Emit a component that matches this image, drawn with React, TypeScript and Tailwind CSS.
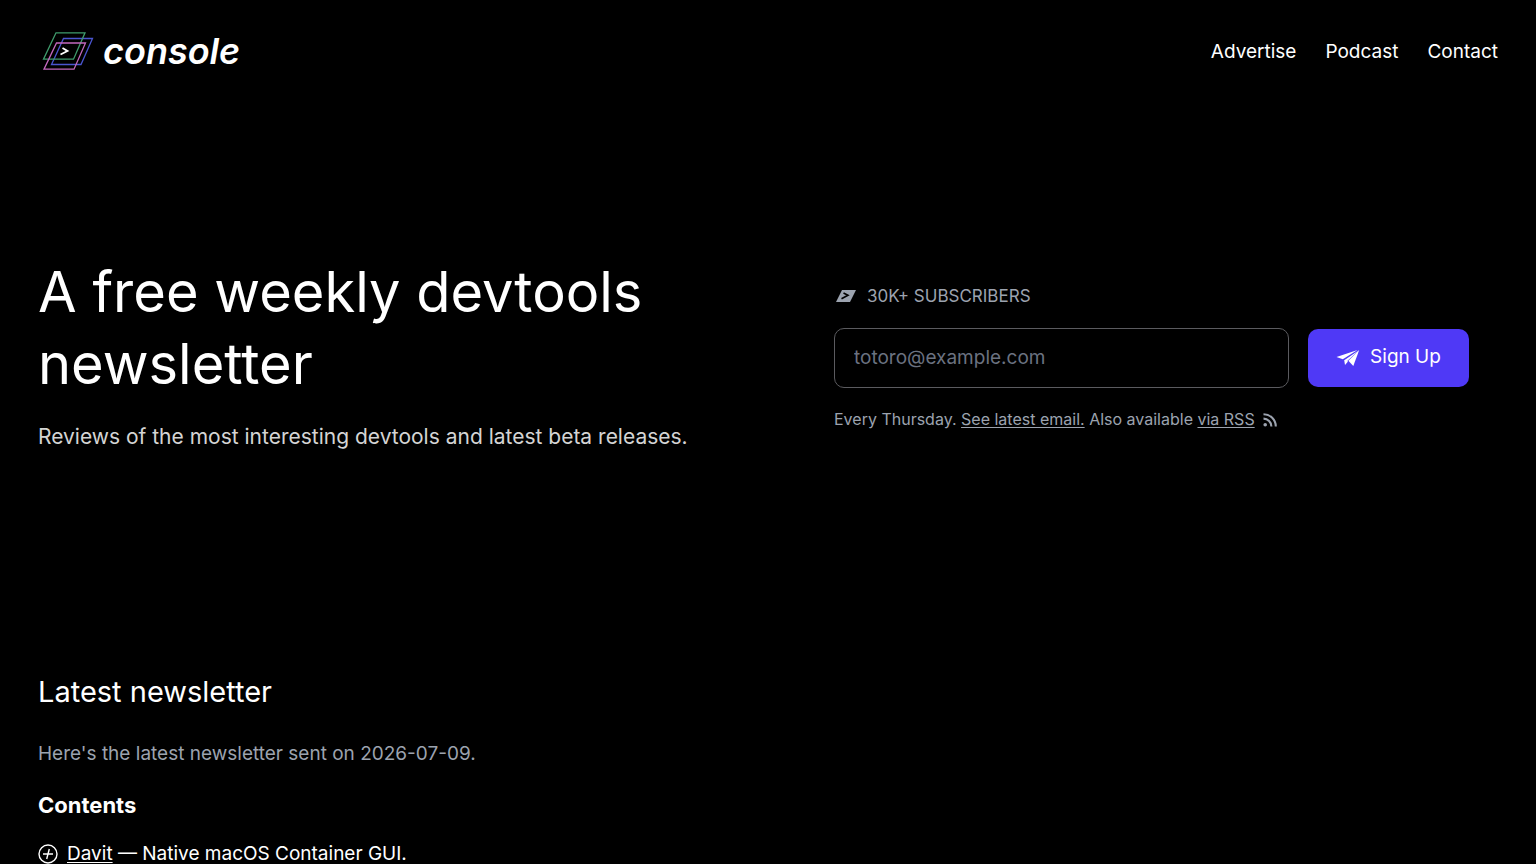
import React, { useState } from "react";

const navLinks = [
  { label: "Advertise", href: "#advertise" },
  { label: "Podcast", href: "#podcast" },
  { label: "Contact", href: "#contact" },
];

const contents = [
  { name: "Davit", description: "Native macOS Container GUI.", href: "#davit" },
];

const LogoMark = () => (
  <svg viewBox="0 0 52 40" fill="none" className="w-[52px] h-10" aria-hidden="true">
    <path d="M21.5 7.5H50.5L39 33.5H9.5Z" stroke="#4a55cf" strokeWidth="1.3" />
    <path d="M14 1.8H43L31.5 28.2H1.5Z" stroke="#3f9b6c" strokeWidth="1.3" />
    <path d="M14.5 12H43.5L32 38.2H2Z" stroke="#c468be" strokeWidth="1.3" />
    <path d="M20.5 17L25.5 20L18.5 23.5" stroke="#fff" strokeWidth="1.8" />
  </svg>
);

const SubscribersIcon = () => (
  <svg viewBox="0 0 20 14" className="w-5 h-[14px]" aria-hidden="true">
    <path d="M6 1H20L14 13H0Z" fill="#9ca3af" />
    <path d="M7.5 4L12 6.3L5.5 9.8" fill="none" stroke="#000" strokeWidth="1.6" />
  </svg>
);

const PaperPlaneIcon = () => (
  <svg viewBox="0 0 24 18" fill="currentColor" className="w-6 h-[18px]" aria-hidden="true">
    <path d="M21.5 1L0.5 8L6.8 10.2Z" />
    <path d="M23 1.2L8.2 11.2L9 16L11.8 12.8L11.5 11.8Z" />
    <path d="M23.2 1L12.4 11.8L17.3 17Z" />
  </svg>
);

const RssIcon = () => (
  <svg viewBox="0 0 14 14" fill="none" stroke="currentColor" className="inline w-[14px] h-[14px] ml-2" aria-hidden="true">
    <circle cx="2.2" cy="11.8" r="1.8" fill="currentColor" stroke="none" />
    <path d="M0.5 5.6A7.9 7.9 0 0 1 8.4 13.5M0.5 1.2A12.3 12.3 0 0 1 12.8 13.5" strokeWidth="2.1" />
  </svg>
);

const PlusCircleIcon = () => (
  <svg viewBox="0 0 20 20" fill="none" stroke="currentColor" className="w-5 h-5 shrink-0" aria-hidden="true">
    <circle cx="10" cy="10" r="9" strokeWidth="1.4" />
    <path d="M5 10H15M11.3 5L8.7 15" strokeWidth="1.4" />
  </svg>
);

const Header = () => (
  <header className="flex items-center justify-between px-[38px] pt-[31px]">
    <a href="#home" className="flex items-center gap-[9px] pl-1">
      <LogoMark />
      <span className="text-4xl font-semibold italic">console</span>
    </a>
    <nav className="flex gap-[29px] pt-0.5 text-[19px] leading-7">
      {navLinks.map((link) => (
        <a key={link.label} href={link.href}>
          {link.label}
        </a>
      ))}
    </nav>
  </header>
);

const SignUpForm = () => {
  const [email, setEmail] = useState("");

  return (
    <form onSubmit={(e) => e.preventDefault()} className="text-[#9ca3af]">
      <label htmlFor="email" className="flex items-center gap-[11px] pl-0.5 text-[17px] leading-6">
        <SubscribersIcon />
        30K+ SUBSCRIBERS
      </label>
      <div className="flex items-center gap-[19px] mt-5">
        <input
          id="email"
          type="email"
          value={email}
          onChange={(e) => setEmail(e.target.value)}
          placeholder="totoro@example.com"
          className="flex-1 min-w-0 h-[60px] px-[19px] text-[19px] text-white placeholder-[#6b7280] bg-black border border-[#5b5b5f] rounded-[10px]"
        />
        <button
          type="submit"
          className="flex items-center justify-center gap-[10px] w-[161px] h-[58px] text-[19px] text-white bg-[#4f39f6] rounded-[10px]"
        >
          <PaperPlaneIcon />
          Sign Up
        </button>
      </div>
      <p className="mt-[19px] text-base leading-6">
        Every Thursday.{" "}
        <a href="#latest" className="underline underline-offset-2">
          See latest email.
        </a>{" "}
        Also available{" "}
        <a href="#rss" className="underline underline-offset-2">
          via RSS
        </a>
        <RssIcon />
      </p>
    </form>
  );
};

const Hero = () => (
  <section className="grid grid-cols-2 items-center px-[38px] pt-[185px] pb-[219px]">
    <div>
      <h1 className="text-[56px] leading-[72px]">A free weekly devtools newsletter</h1>
      <p className="mt-[21px] text-[21px] leading-8 text-[#d4d4d4] whitespace-nowrap">
        Reviews of the most interesting devtools and latest beta releases.
      </p>
    </div>
    <div className="pt-[5px] pl-[66px] pr-[29px]">
      <SignUpForm />
    </div>
  </section>
);

const LatestNewsletter = () => (
  <section id="latest" className="px-[38px]">
    <h2 className="text-[29px] leading-10">Latest newsletter</h2>
    <p className="mt-[26px] text-[19px] leading-8 text-[#9ca3af]">
      Here's the latest newsletter sent on 2026-07-09.
    </p>
    <h3 className="mt-[19px] text-[22px] leading-8 font-bold">Contents</h3>
    <ul className="mt-[19px] text-[19px] leading-7">
      {contents.map((item) => (
        <li key={item.name} className="flex items-center gap-[9px]">
          <PlusCircleIcon />
          <span>
            <a href={item.href} className="underline underline-offset-2">
              {item.name}
            </a>{" "}
            — {item.description}
          </span>
        </li>
      ))}
    </ul>
  </section>
);

function App() {
  return (
    <div className="min-h-screen bg-black text-white font-['Inter',sans-serif]">
      <Header />
      <main>
        <Hero />
        <LatestNewsletter />
      </main>
    </div>
  );
}

export default App;
